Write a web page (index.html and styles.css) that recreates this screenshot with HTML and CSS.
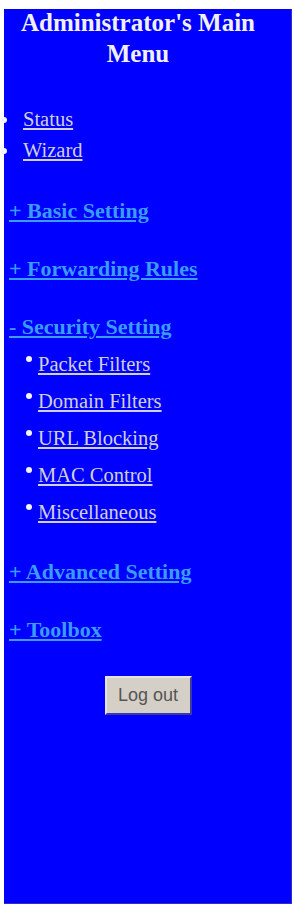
FILE: index.html
```html
<!DOCTYPE html>
<html lang="en">

<head>
    <meta charset="UTF-8">
    <meta name="viewport" content="width=device-width, initial-scale=1.0">
    <title>Main Menu</title>
    <link rel="stylesheet" href="styles.css">
</head>

<body>
    <div class="menu-panel">
        <h1 class="menu-title">Administrator's Main<br>Menu</h1>

        <ul class="top-links">
            <li><a href="#">Status</a></li>
            <li><a href="#">Wizard</a></li>
        </ul>

        <a class="group" href="#">+ Basic Setting</a>
        <a class="group" href="#">+ Forwarding Rules</a>
        <a class="group" href="#">- Security Setting</a>
        <ul class="sub-links">
            <li><a href="#">Packet Filters</a></li>
            <li><a href="#">Domain Filters</a></li>
            <li><a href="#">URL Blocking</a></li>
            <li><a href="#">MAC Control</a></li>
            <li><a href="#">Miscellaneous</a></li>
        </ul>
        <a class="group after-sub" href="#">+ Advanced Setting</a>
        <a class="group" href="#">+ Toolbox</a>

        <div class="logout-row">
            <button class="logout-btn">Log out</button>
        </div>
    </div>
</body>

</html>
```

FILE: styles.css
```css
body {
    margin: 0;
    padding: 9px 3px 3px 4px;
    background-color: #ffffff;
    font-family: 'Liberation Serif', 'Times New Roman', serif;
}

.menu-panel {
    background-color: #0000ff;
    height: 895px;
    box-sizing: border-box;
    padding: 0 5px;
    box-shadow: inset -1px -1px 0 #3030c0;
}

.menu-title {
    margin: 0;
    padding-right: 20px;
    color: #f0f0fa;
    font-size: 25px;
    font-weight: bold;
    line-height: 31px;
    text-align: center;
    position: relative;
    top: -2px;
}

ul {
    list-style-type: none;
    margin: 0;
    padding: 0;
}

li {
    position: relative;
    font-size: 20.5px;
}

li a {
    color: #d0d0da;
}

/* dots in front of the links */
li::before {
    content: "";
    position: absolute;
    width: 6px;
    height: 6px;
    border-radius: 50%;
    background-color: #f4f4ff;
}

.top-links {
    margin-top: 33px;
}

.top-links li {
    line-height: 31px;
    padding-left: 14px;
}

.top-links li::before {
    left: -8px;
    top: 13px;
}

.group {
    display: block;
    margin-top: 34px;
    color: #3a9cff;
    font-size: 22px;
    font-weight: bold;
    line-height: 24px;
    width: max-content;
}

.top-links + .group {
    margin-top: 33px;
}

.sub-links {
    margin-top: 7px;
}

.sub-links li {
    line-height: 37px;
    padding-left: 29px;
}

.sub-links li::before {
    left: 17px;
    top: 10px;
}

.group.after-sub {
    margin-top: 29px;
}

.logout-row {
    margin-top: 34px;
    text-align: center;
}

.logout-btn {
    width: 87px;
    height: 39px;
    background-color: #d4d0c8;
    color: #555555;
    border: 2px solid #e6e4de;
    border-right-color: #3a3aa0;
    border-bottom-color: #3a3aa0;
    font-family: 'Liberation Sans', Arial, sans-serif;
    font-size: 18px;
    padding: 0;
}
```
